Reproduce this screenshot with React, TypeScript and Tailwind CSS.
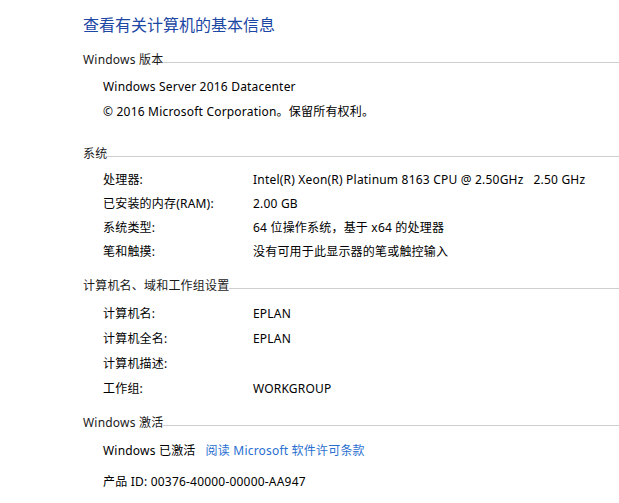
import React from 'react'

const font = { fontFamily: '"Noto Sans", "Noto Sans CJK SC", sans-serif' }

const Heading: React.FC<{ title: string; className?: string }> = ({ title, className }) => (
  <div className={`flex items-center h-[20px] ${className ?? ''}`}>
    <span className="text-[12px] text-[#1a1a1a] whitespace-nowrap tracking-[0.2px]">{title}</span>
    <div className="flex-1 h-px bg-[#cfcfcf] mt-[4px]" />
  </div>
)

const Row: React.FC<{ label: string; value?: string; h?: string }> = ({ label, value, h = 'h-[25px]' }) => (
  <div className={`flex items-center pl-[20px] ${h} text-[12px] text-black tracking-[0.2px]`}>
    <span className="w-[150px] whitespace-nowrap">{label}</span>
    <span className="whitespace-pre">{value}</span>
  </div>
)

export default function App() {
  return (
    <div className="w-[619px] h-[503px] bg-white overflow-hidden pl-[83px] pt-[15px]" style={font}>
      {/* 标题 */}
      <div className="h-[20px] flex items-center text-[16px] text-[#1c47a4] whitespace-nowrap">
        查看有关计算机的基本信息
      </div>

      {/* Windows 版本 */}
      <Heading title="Windows 版本" className="mt-[15px]" />
      <div className="mt-[4px] pl-[20px] text-[12px] text-black tracking-[0.2px]">
        <div className="h-[25px] flex items-center whitespace-nowrap">Windows Server 2016 Datacenter</div>
        <div className="h-[25px] flex items-center whitespace-nowrap">© 2016 Microsoft Corporation。保留所有权利。</div>
      </div>

      {/* 系统 */}
      <Heading title="系统" className="mt-[20px]" />
      <div className="mt-[4px]">
        <Row h="h-[24px]" label="处理器:" value="Intel(R) Xeon(R) Platinum 8163 CPU @ 2.50GHz   2.50 GHz" />
        <Row h="h-[24px]" label="已安装的内存(RAM):" value="2.00 GB" />
        <Row h="h-[24px]" label="系统类型:" value="64 位操作系统，基于 x64 的处理器" />
        <Row h="h-[24px]" label="笔和触摸:" value="没有可用于此显示器的笔或触控输入" />
      </div>

      {/* 计算机名 */}
      <Heading title="计算机名、域和工作组设置" className="mt-[12px]" />
      <div className="mt-[5px]">
        <Row label="计算机名:" value="EPLAN" />
        <Row label="计算机全名:" value="EPLAN" />
        <Row label="计算机描述:" />
        <Row label="工作组:" value="WORKGROUP" />
      </div>

      {/* Windows 激活 */}
      <Heading title="Windows 激活" className="mt-[12px]" />
      <div className="mt-[5px] pl-[20px] text-[12px] text-black tracking-[0.2px]">
        <div className="h-[25px] flex items-center whitespace-nowrap">
          <span>Windows 已激活</span>
          <span className="ml-[10px] text-[#2a6fd0]">阅读 Microsoft 软件许可条款</span>
        </div>
        <div className="h-[25px] mt-[6px] flex items-center whitespace-nowrap">产品 ID: 00376-40000-00000-AA947</div>
      </div>
    </div>
  )
}
